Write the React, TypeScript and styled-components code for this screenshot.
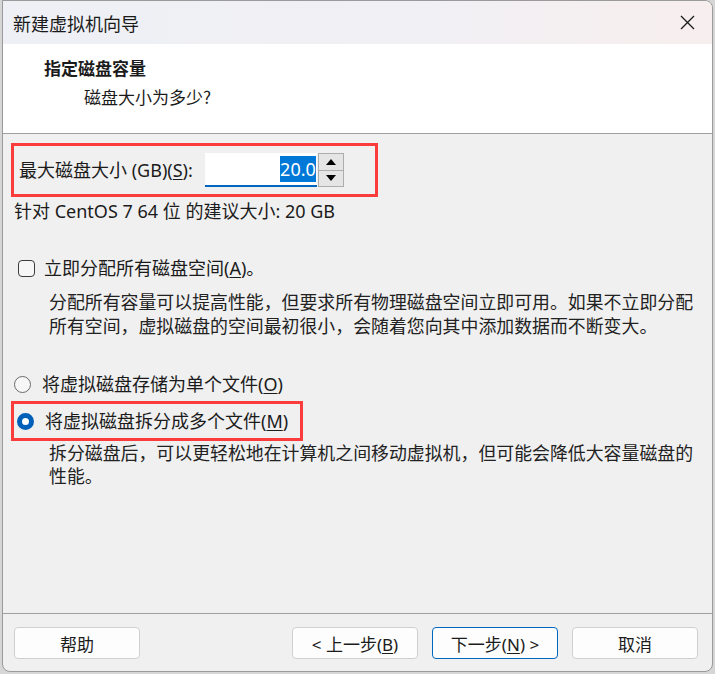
import styled, { createGlobalStyle } from 'styled-components';

const GlobalStyle = createGlobalStyle`
  html, body {
    margin: 0;
    padding: 0;
    background: #d6d6d6;
  }
  body {
    font-family: "Noto Sans", "Noto Sans CJK SC", sans-serif;
    font-size: 18px;
    color: #1b1b1b;
  }
`;

const Window = styled.div`
  box-sizing: border-box;
  width: 711px;
  height: 672px;
  margin-left: 2px;
  display: flex;
  flex-direction: column;
  background: #f0f0f0;
  border: 1px solid #9a9a9a;
  border-radius: 0 8px 8px 8px;
  overflow: hidden;
`;

const TitleBar = styled.div`
  height: 43px;
  flex-shrink: 0;
  display: flex;
  align-items: center;
  justify-content: space-between;
  padding: 0 17px 0 10px;
  background: linear-gradient(90deg, #eef0f5 0%, #f1f0f4 60%, #f7eeee 100%);
`;

const Title = styled.div`
  font-family: "Noto Sans CJK SC", sans-serif;
  font-size: 18px;
  color: #1a1a1a;
`;

const Header = styled.div`
  height: 90px;
  flex-shrink: 0;
  box-sizing: border-box;
  background: #fff;
  border-bottom: 1px solid #a0a0a0;
  padding: 12px 0 0 41px;
`;

const HeaderTitle = styled.div`
  font-family: "Noto Sans CJK SC", serif;
  font-weight: 700;
  font-size: 17px;
  line-height: 24px;
`;

const HeaderSub = styled.div`
  font-family: "Noto Sans CJK SC", serif;
  font-size: 17px;
  line-height: 24px;
  margin: 5px 0 0 40px;
`;

const Body = styled.div`
  flex: 1;
  display: flex;
  flex-direction: column;
  align-items: flex-start;
  padding: 9px 0 0 8px;
`;

const Highlight = styled.div`
  box-sizing: border-box;
  border: 3px solid #fa3c3c;
  display: flex;
  align-items: center;
`;

const SizeBox = styled(Highlight)`
  width: 367px;
  height: 54px;
  padding-left: 5px;
  gap: 12px;
`;

const Label = styled.span`
  line-height: 24px;
  white-space: nowrap;
`;

const Key = styled.span`
  text-decoration: underline;
  text-underline-offset: 2px;
`;

const SpinField = styled.div`
  display: flex;
  align-items: stretch;
  height: 34px;
`;

const Field = styled.div`
  box-sizing: border-box;
  width: 112px;
  background: #fff;
  border-bottom: 2px solid #0067c0;
  display: flex;
  align-items: center;
  justify-content: flex-end;
  padding-right: 1px;
`;

const Selected = styled.span`
  background: #0078d7;
  color: #fff;
  line-height: 26px;
  font-family: "Noto Sans", sans-serif;
`;

const Spinner = styled.div`
  width: 26px;
  margin-left: 1px;
  display: flex;
  flex-direction: column;
  border: 1px solid #adadad;
  box-sizing: border-box;
`;

const SpinButton = styled.div<{ $down?: boolean }>`
  flex: 1;
  background: #e5e5e5;
  display: flex;
  align-items: center;
  justify-content: center;
  border-top: ${(p) => (p.$down ? '1px solid #adadad' : 'none')};
`;

const Hint = styled.div`
  margin: 2px 0 0 3px;
  line-height: 24px;
`;

const OptionRow = styled.div<{ $top: number; $left: number; $gap: number }>`
  display: flex;
  align-items: center;
  gap: ${(p) => p.$gap}px;
  margin-top: ${(p) => p.$top}px;
  margin-left: ${(p) => p.$left}px;
  line-height: 24px;
`;

const Checkbox = styled.span`
  box-sizing: border-box;
  width: 17px;
  height: 17px;
  border: 1px solid #3c3c3c;
  border-radius: 4px;
  background: #f7f7f7;
`;

const Radio = styled.span<{ $checked?: boolean }>`
  box-sizing: border-box;
  width: 17px;
  height: 17px;
  border-radius: 50%;
  border: ${(p) => (p.$checked ? '5px solid #005fb8' : '1px solid #6a6a6a')};
  background: ${(p) => (p.$checked ? '#fff' : '#f7f7f7')};
  flex-shrink: 0;
`;

const SplitBox = styled(Highlight)`
  width: 292px;
  height: 40px;
  padding-left: 3px;
  margin-top: 5px;
`;

const Desc = styled.p<{ $top: number; $lh: number }>`
  margin: ${(p) => p.$top}px 0 0 38px;
  width: 650px;
  font-family: "Noto Sans CJK SC", sans-serif;
  font-size: 17.9px;
  line-height: ${(p) => p.$lh}px;
  color: #222;
`;

const Footer = styled.div`
  flex-shrink: 0;
  height: 58px;
  box-sizing: border-box;
  border-top: 1px solid #a0a0a0;
  display: flex;
  align-items: flex-start;
  padding: 13px 14px 0 11px;
  gap: 14px;
`;

const Button = styled.button<{ $primary?: boolean }>`
  width: 126px;
  height: 32px;
  box-sizing: border-box;
  background: #fdfdfd;
  border: 1px solid ${(p) => (p.$primary ? '#0067c0' : '#d0d0d0')};
  border-radius: 4px;
  font-family: "Noto Sans", "Noto Sans CJK SC", sans-serif;
  font-size: 17px;
  color: #1b1b1b;
  padding: 0;
`;

const Spacer = styled.div`
  flex: 1;
`;

function Arrow({ down }: { down?: boolean }) {
  return (
    <svg width="10" height="6" viewBox="0 0 10 6">
      <path d={down ? 'M0 0 H10 L5 6 Z' : 'M0 6 H10 L5 0 Z'} fill="#000" />
    </svg>
  );
}

export default function App() {
  return (
    <>
      <GlobalStyle />
      <Window>
        <TitleBar>
          <Title>新建虚拟机向导</Title>
          <svg width="15" height="15" viewBox="0 0 15 15">
            <path d="M1 1 L14 14 M14 1 L1 14" stroke="#1a1a1a" strokeWidth="1.3" />
          </svg>
        </TitleBar>
        <Header>
          <HeaderTitle>指定磁盘容量</HeaderTitle>
          <HeaderSub>磁盘大小为多少?</HeaderSub>
        </Header>
        <Body>
          <SizeBox>
            <Label>
              最大磁盘大小 (GB)(<Key>S</Key>):
            </Label>
            <SpinField>
              <Field>
                <Selected>20.0</Selected>
              </Field>
              <Spinner>
                <SpinButton>
                  <Arrow />
                </SpinButton>
                <SpinButton $down>
                  <Arrow down />
                </SpinButton>
              </Spinner>
            </SpinField>
          </SizeBox>
          <Hint>针对 CentOS 7 64 位 的建议大小: 20 GB</Hint>
          <OptionRow $top={33} $left={7} $gap={9}>
            <Checkbox />
            <Label>
              立即分配所有磁盘空间(<Key>A</Key>)。
            </Label>
          </OptionRow>
          <Desc $top={9} $lh={24}>
            分配所有容量可以提高性能，但要求所有物理磁盘空间立即可用。如果不立即分配所有空间，虚拟磁盘的空间最初很小，会随着您向其中添加数据而不断变大。
          </Desc>
          <OptionRow $top={35} $left={3} $gap={11}>
            <Radio />
            <Label>
              将虚拟磁盘存储为单个文件(<Key>O</Key>)
            </Label>
          </OptionRow>
          <SplitBox>
            <OptionRow $top={0} $left={0} $gap={11}>
              <Radio $checked />
              <Label>
                将虚拟磁盘拆分成多个文件(<Key>M</Key>)
              </Label>
            </OptionRow>
          </SplitBox>
          <Desc $top={0} $lh={23}>
            拆分磁盘后，可以更轻松地在计算机之间移动虚拟机，但可能会降低大容量磁盘的性能。
          </Desc>
        </Body>
        <Footer>
          <Button>帮助</Button>
          <Spacer />
          <Button>
            &lt; 上一步(<Key>B</Key>)
          </Button>
          <Button $primary>
            下一步(<Key>N</Key>) &gt;
          </Button>
          <Button>取消</Button>
        </Footer>
      </Window>
    </>
  );
}
